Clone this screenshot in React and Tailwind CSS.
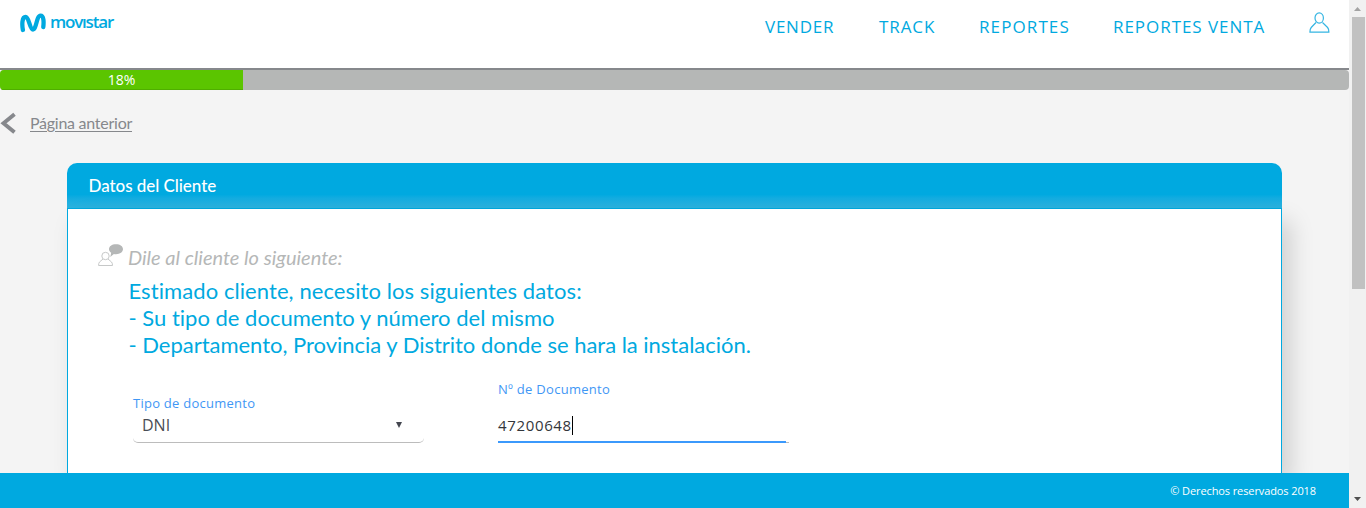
const NAV = [
  { label: 'VENDER', cls: 'w-[70px] tracking-[0.75px]' },
  { label: 'TRACK', cls: 'w-[56px] tracking-[0.9px]' },
  { label: 'REPORTES', cls: 'w-[90px] tracking-[1.1px]' },
  { label: 'REPORTES VENTA', cls: 'w-[152px] tracking-[0.95px]' },
];

function Logo() {
  return (
    <div className="flex h-[22px] items-center gap-[4px] text-[#00a9e0]">
      <svg width="26" height="20" viewBox="0 0 26 20" fill="none" stroke="currentColor" strokeWidth="4.300" strokeLinecap="round" strokeLinejoin="round">
        <path d="M2.900 17C1.900 11.500 1.900 4 5.600 4c3.600 0 4 12.500 7.400 12.500C16.400 16.500 16.500 2.600 20.500 2.600c3.500 0 3.300 7 2.800 11.400" />
      </svg>
      <span className="relative -top-px w-[64px] text-[17px] leading-[22px] font-semibold tracking-[-1.2px] font-['Open_Sans',sans-serif]">movıstar</span>
    </div>
  );
}

function UserIcon() {
  return (
    <svg width="21" height="22" viewBox="0 0 21 22" fill="none" stroke="#35b5e2" strokeWidth="1.200">
      <ellipse cx="10.200" cy="6" rx="4.200" ry="5.200" />
      <path d="M7 10.500 2.200 15.500Q.9 17 .9 20.200H19.900Q19.900 17 18.600 15.500L13.500 10.500" strokeLinejoin="round" />
    </svg>
  );
}

function ClientIcon() {
  return (
    <svg width="26" height="24" viewBox="0 0 26 24" fill="none" stroke="#c6c8c8">
      <circle cx="7.500" cy="12" r="3.700" />
      <path d="M5 15 1.500 18Q.600 19 .600 21.500H14.500Q14.500 19 13.500 18L10 15" strokeLinejoin="round" />
      <path d="M18 .200c4.200 0 7 2.100 7 4.900 0 3-2.900 5.100-7 5.100-.8 0-1.500-.1-2.100-.3L12.300 13l.9-4.200c-1.500-.9-2.200-2.100-2.200-3.700 0-2.800 2.800-4.900 7-4.900z" fill="#b5b7b7" stroke="none" />
    </svg>
  );
}

export default function App() {
  return (
    <div className="flex h-[508px] w-[1366px] overflow-hidden bg-[#f4f4f4] [font-variant-ligatures:none] font-['Lato',sans-serif]">
      <div className="flex w-[1349px] flex-col overflow-hidden">
        <header className="flex h-[70px] shrink-0 items-start justify-between border-b-2 border-[#86888c] bg-white pl-5 pr-[19px] pt-3">
          <Logo />
          <nav className="flex items-start gap-[44px] text-[#00a9e0]">
            {NAV.map((n) => (
              <a key={n.label} className={`pt-[3px] text-[17px] leading-[24px] whitespace-nowrap font-['Open_Sans',sans-serif] ${n.cls}`}>{n.label}</a>
            ))}
            <UserIcon />
          </nav>
        </header>

        <div className="flex h-5 shrink-0 overflow-hidden rounded bg-[#b5b7b6]">
          <div className="flex w-[243px] items-center justify-center border-b border-[#4fae00] bg-[#5bc500] text-[14px] font-medium leading-5 text-white font-['Open_Sans',sans-serif]">18%</div>
        </div>

        <div className="flex h-[73px] shrink-0 items-start pt-[22px] text-[#86888c]">
          <svg width="16" height="22" viewBox="0 0 16 22" fill="none" stroke="currentColor" strokeWidth="3.900">
            <path d="M14.500 2.200 3.500 11.200 14.500 20.200" />
          </svg>
          <a className="-mt-px ml-[14px] text-[16px] leading-[24px] tracking-[-0.26px] underline underline-offset-2">Página anterior</a>
        </div>

        <main className="mx-[67px] flex min-h-0 flex-1 flex-col">
          <div className="h-[46px] shrink-0 rounded-t-[10px] border-b border-[#00a9e0] bg-linear-to-b from-[#00a9e0] from-70% to-[#2bb3df] pl-[21.5px] text-[17px] font-medium leading-[46px] tracking-[-0.05px] text-white">Datos del Cliente</div>
          <div className="flex-1 border-x border-[#00a9e0] bg-white pl-[30px] shadow-[9px_12px_22px_rgba(0,0,0,0.15)]">
            <div className="flex items-start pt-[35px]">
              <ClientIcon />
              <p className="-mt-px ml-[4px] text-[20px] italic leading-[28px] text-[#b5b7b7]">Dile al cliente lo siguiente:</p>
            </div>
            <div className="ml-[30.5px] mt-[6px] whitespace-nowrap text-[22px] leading-[27px] text-[#00a9e0]">
              <p className="tracking-[0.08px]">Estimado cliente, necesito los siguientes datos:</p>
              <p>- Su tipo de documento y número del mismo</p>
              <p className="tracking-[-0.02px]">- Departamento, Provincia y Distrito donde se hara la instalación.</p>
            </div>
            <div className="ml-[35px] mt-[21px] flex font-['Open_Sans',sans-serif]">
              <div className="w-[291px] pt-[14px]">
                <label className="block text-[13px] leading-[20px] tracking-[0.25px] text-[#3f97f5]">Tipo de documento</label>
                <div className="mt-px flex h-[29px] items-center justify-between rounded-[5px] border-b border-[#bcbcbc] pb-[6px] pl-[9px] pr-[22px] text-[16px] text-[#4a4d55]">
                  <span>DNI</span>
                  <svg width="6" height="6" viewBox="0 0 6 6" fill="#444750"><path d="M0 0H6L3 6Z" /></svg>
                </div>
              </div>
              <div className="ml-[74px] w-[291px]">
                <label className="block text-[13px] leading-[20px] tracking-[0.28px] text-[#3f97f5]">Nº de Documento</label>
                <div className="mt-[15px] flex h-[29px] items-end border-b border-[#bcbcbc]">
                  <div className="-mb-px flex h-full w-[288px] items-center border-b-2 border-[#3b99fc] pb-[5px] text-[15px] tracking-[0.65px] text-[#33363b]">
                    <span>47200648</span>
                    <span className="h-[19px] w-px bg-black" />
                  </div>
                </div>
              </div>
            </div>
          </div>
        </main>

        <footer className="z-10 flex h-[35px] shrink-0 items-center justify-end bg-[#00a9e0] pr-[33px] pt-[2px] text-[11px] font-medium tracking-[-0.1px] text-white font-['Open_Sans',sans-serif]">© Derechos reservados 2018</footer>
      </div>

      <div className="flex w-[17px] flex-col items-center justify-between bg-[#f1f1f1]">
        <svg className="shrink-0" width="17" height="17" viewBox="0 0 17 17" fill="#a3a3a3"><path d="M5 11H12L8.500 7Z" /></svg>
        <div className="ml-px h-[272px] w-[13px] bg-[#c1c1c1]" />
        <div className="flex-1" />
        <svg className="shrink-0" width="17" height="17" viewBox="0 0 17 17" fill="#505050"><path d="M5 6H12L8.500 10Z" /></svg>
      </div>
    </div>
  );
}
